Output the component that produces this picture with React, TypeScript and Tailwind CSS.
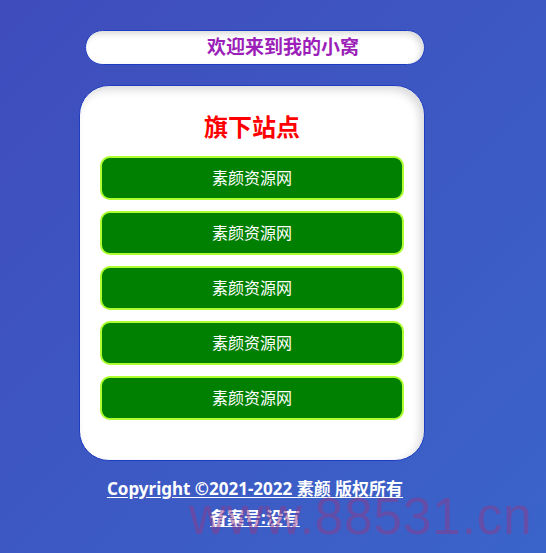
import React from 'react';

const SITES = ['素颜资源网', '素颜资源网', '素颜资源网', '素颜资源网', '素颜资源网'];

export default function App() {
  return (
    <div
      className="relative min-h-[553px] w-full overflow-hidden bg-gradient-to-br from-[#3f4cbc] to-[#3a64ca] pt-[30px]"
      style={{ fontFamily: '"Noto Sans", "Noto Sans CJK SC", sans-serif' }}
    >
      <div className="ml-[79px] w-[346px]">
        {/* welcome bar */}
        <div className="ml-[6px] flex h-[35px] w-[340px] items-center justify-center rounded-full border border-[#1d3cbf] bg-white pl-[56px] shadow-[inset_-3px_3px_6px_rgba(0,0,0,0.15)]">
          <span className="text-[19px] font-bold leading-none text-[#9b1fb8]">欢迎来到我的小窝</span>
        </div>

        {/* sites card */}
        <div className="mt-[20px] flex h-[376px] flex-col items-center rounded-[30px] border border-[#1d3cbf] bg-white px-[20px] pb-[41px] shadow-[inset_-4px_4px_8px_rgba(0,0,0,0.15)]">
          <h2 className="mt-[26px] text-[24px] font-bold leading-[30px] text-[#ff0000]">旗下站点</h2>
          <div className="mt-[14px] flex w-full flex-col gap-[11px]">
            {SITES.map((name, i) => (
              <a
                key={i}
                href="#"
                className="flex h-[44px] w-full items-center justify-center rounded-[10px] border-2 border-[#adff2f] bg-[#008000] text-[16px] text-white"
              >
                {name}
              </a>
            ))}
          </div>
        </div>
      </div>

      {/* footer */}
      <div className="ml-[79px] mt-[15px] flex w-[352px] flex-col items-center text-white">
        <a href="#" className="text-[17px] font-bold leading-[25px] underline underline-offset-2">
          Copyright ©2021-2022 素颜 版权所有
        </a>
        <a href="#" className="mt-[4px] text-[17px] font-bold leading-[25px] underline underline-offset-2">
          备案号:没有
        </a>
      </div>

      {/* watermark */}
      <div
        className="pointer-events-none absolute left-[189px] top-[491px] text-[51px] leading-none tracking-[1px] text-[#8e3a88]/50"
        style={{ fontFamily: '"Liberation Sans", sans-serif' }}
      >
        www.88531.cn
      </div>
    </div>
  );
}
